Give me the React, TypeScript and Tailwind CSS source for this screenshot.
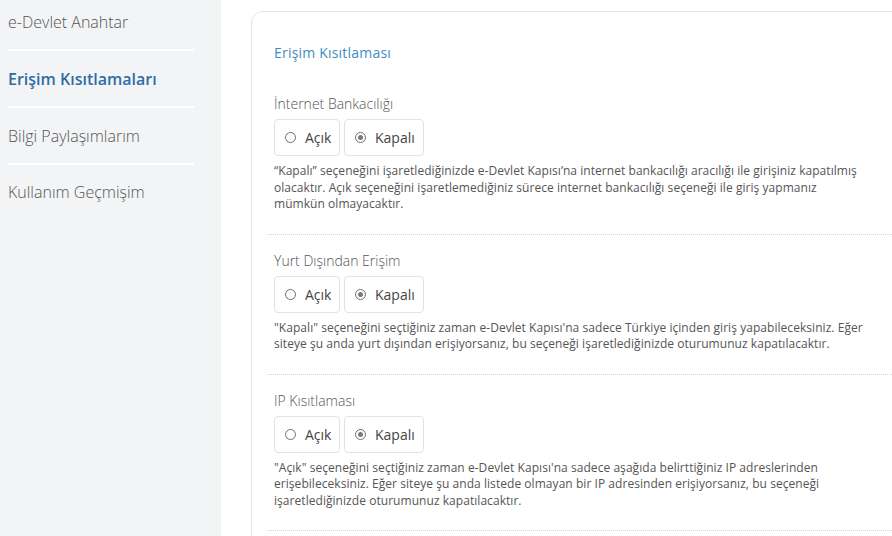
import React from "react";

const font = { fontFamily: '"Open Sans", "Noto Sans", sans-serif' };

function Radio({ checked }: { checked: boolean }) {
  return (
    <span className="flex h-[11px] w-[11px] items-center justify-center rounded-full border border-[#6f6f6f] bg-white">
      {checked && <span className="h-[5px] w-[5px] rounded-full bg-[#7a7a7a]" />}
    </span>
  );
}

function Toggle() {
  return (
    <div className="mt-[5px] flex gap-[4px]">
      <div className="flex h-[37px] w-[66px] items-center gap-[9px] rounded-[4px] border border-[#e2e2e2] pl-[10px] text-[14px] text-[#444]">
        <Radio checked={false} />
        <span>Açık</span>
      </div>
      <div className="flex h-[37px] w-[80px] items-center gap-[9px] rounded-[4px] border border-[#e2e2e2] pl-[10px] text-[14px] text-[#444]">
        <Radio checked={true} />
        <span>Kapalı</span>
      </div>
    </div>
  );
}

function Section({ label, text, first }: { label: string; text: string; first?: boolean }) {
  return (
    <div className={`border-b border-dotted border-[#d4d4d4] pl-[7px] pb-[21px] ${first ? "pt-0" : "pt-[16px]"}`}>
      <div className="text-[14px] font-light leading-[20px] text-[#555]">{label}</div>
      <Toggle />
      <p className="mt-[7px] w-[590px] text-[12px] leading-[16.5px] tracking-[0.05px] text-[#555]">{text}</p>
    </div>
  );
}

export default function App() {
  const items = ["e-Devlet Anahtar", "Erişim Kısıtlamaları", "Bilgi Paylaşımlarım", "Kullanım Geçmişim"];
  return (
    <div className="flex h-[536px] w-[892px] overflow-hidden bg-white" style={font}>
      <aside className="h-full w-[221px] shrink-0 bg-[#f3f4f6]">
        <ul className="-mt-[6px] px-[8px]">
          {items.map((it, i) => (
            <li
              key={it}
              className={`flex w-[186px] items-center ${i < 3 ? "h-[57px] border-b-2 border-white" : "h-[54px]"} ${
                i === 1 ? "font-semibold text-[#2f6ca6]" : "font-light text-[#555]"
              } text-[16px]`}
            >
              {it}
            </li>
          ))}
        </ul>
      </aside>
      <main className="flex-1 pl-[30px] pt-[11px]">
        <div className="h-[600px] w-[700px] rounded-tl-[12px] border border-[#e6e6e6] pl-[15px] pt-[31px]">
          <h2 className="pl-[7px] text-[14px] leading-[20px] tracking-[0.2px] text-[#3f8cc2]">Erişim Kısıtlaması</h2>
          <div className="mt-[31px]">
            <Section
              first
              label="İnternet Bankacılığı"
              text="“Kapalı” seçeneğini işaretlediğinizde e-Devlet Kapısı’na internet bankacılığı aracılığı ile girişiniz kapatılmış olacaktır. Açık seçeneğini işaretlemediğiniz sürece internet bankacılığı seçeneği ile giriş yapmanız mümkün olmayacaktır."
            />
            <Section
              label="Yurt Dışından Erişim"
              text={'"Kapalı" seçeneğini seçtiğiniz zaman e-Devlet Kapısı\'na sadece Türkiye içinden giriş yapabileceksiniz. Eğer siteye şu anda yurt dışından erişiyorsanız, bu seçeneği işaretlediğinizde oturumunuz kapatılacaktır.'}
            />
            <Section
              label="IP Kısıtlaması"
              text={'"Açık" seçeneğini seçtiğiniz zaman e-Devlet Kapısı\'na sadece aşağıda belirttiğiniz IP adreslerinden erişebileceksiniz. Eğer siteye şu anda listede olmayan bir IP adresinden erişiyorsanız, bu seçeneği işaretlediğinizde oturumunuz kapatılacaktır.'}
            />
          </div>
        </div>
      </main>
    </div>
  );
}
